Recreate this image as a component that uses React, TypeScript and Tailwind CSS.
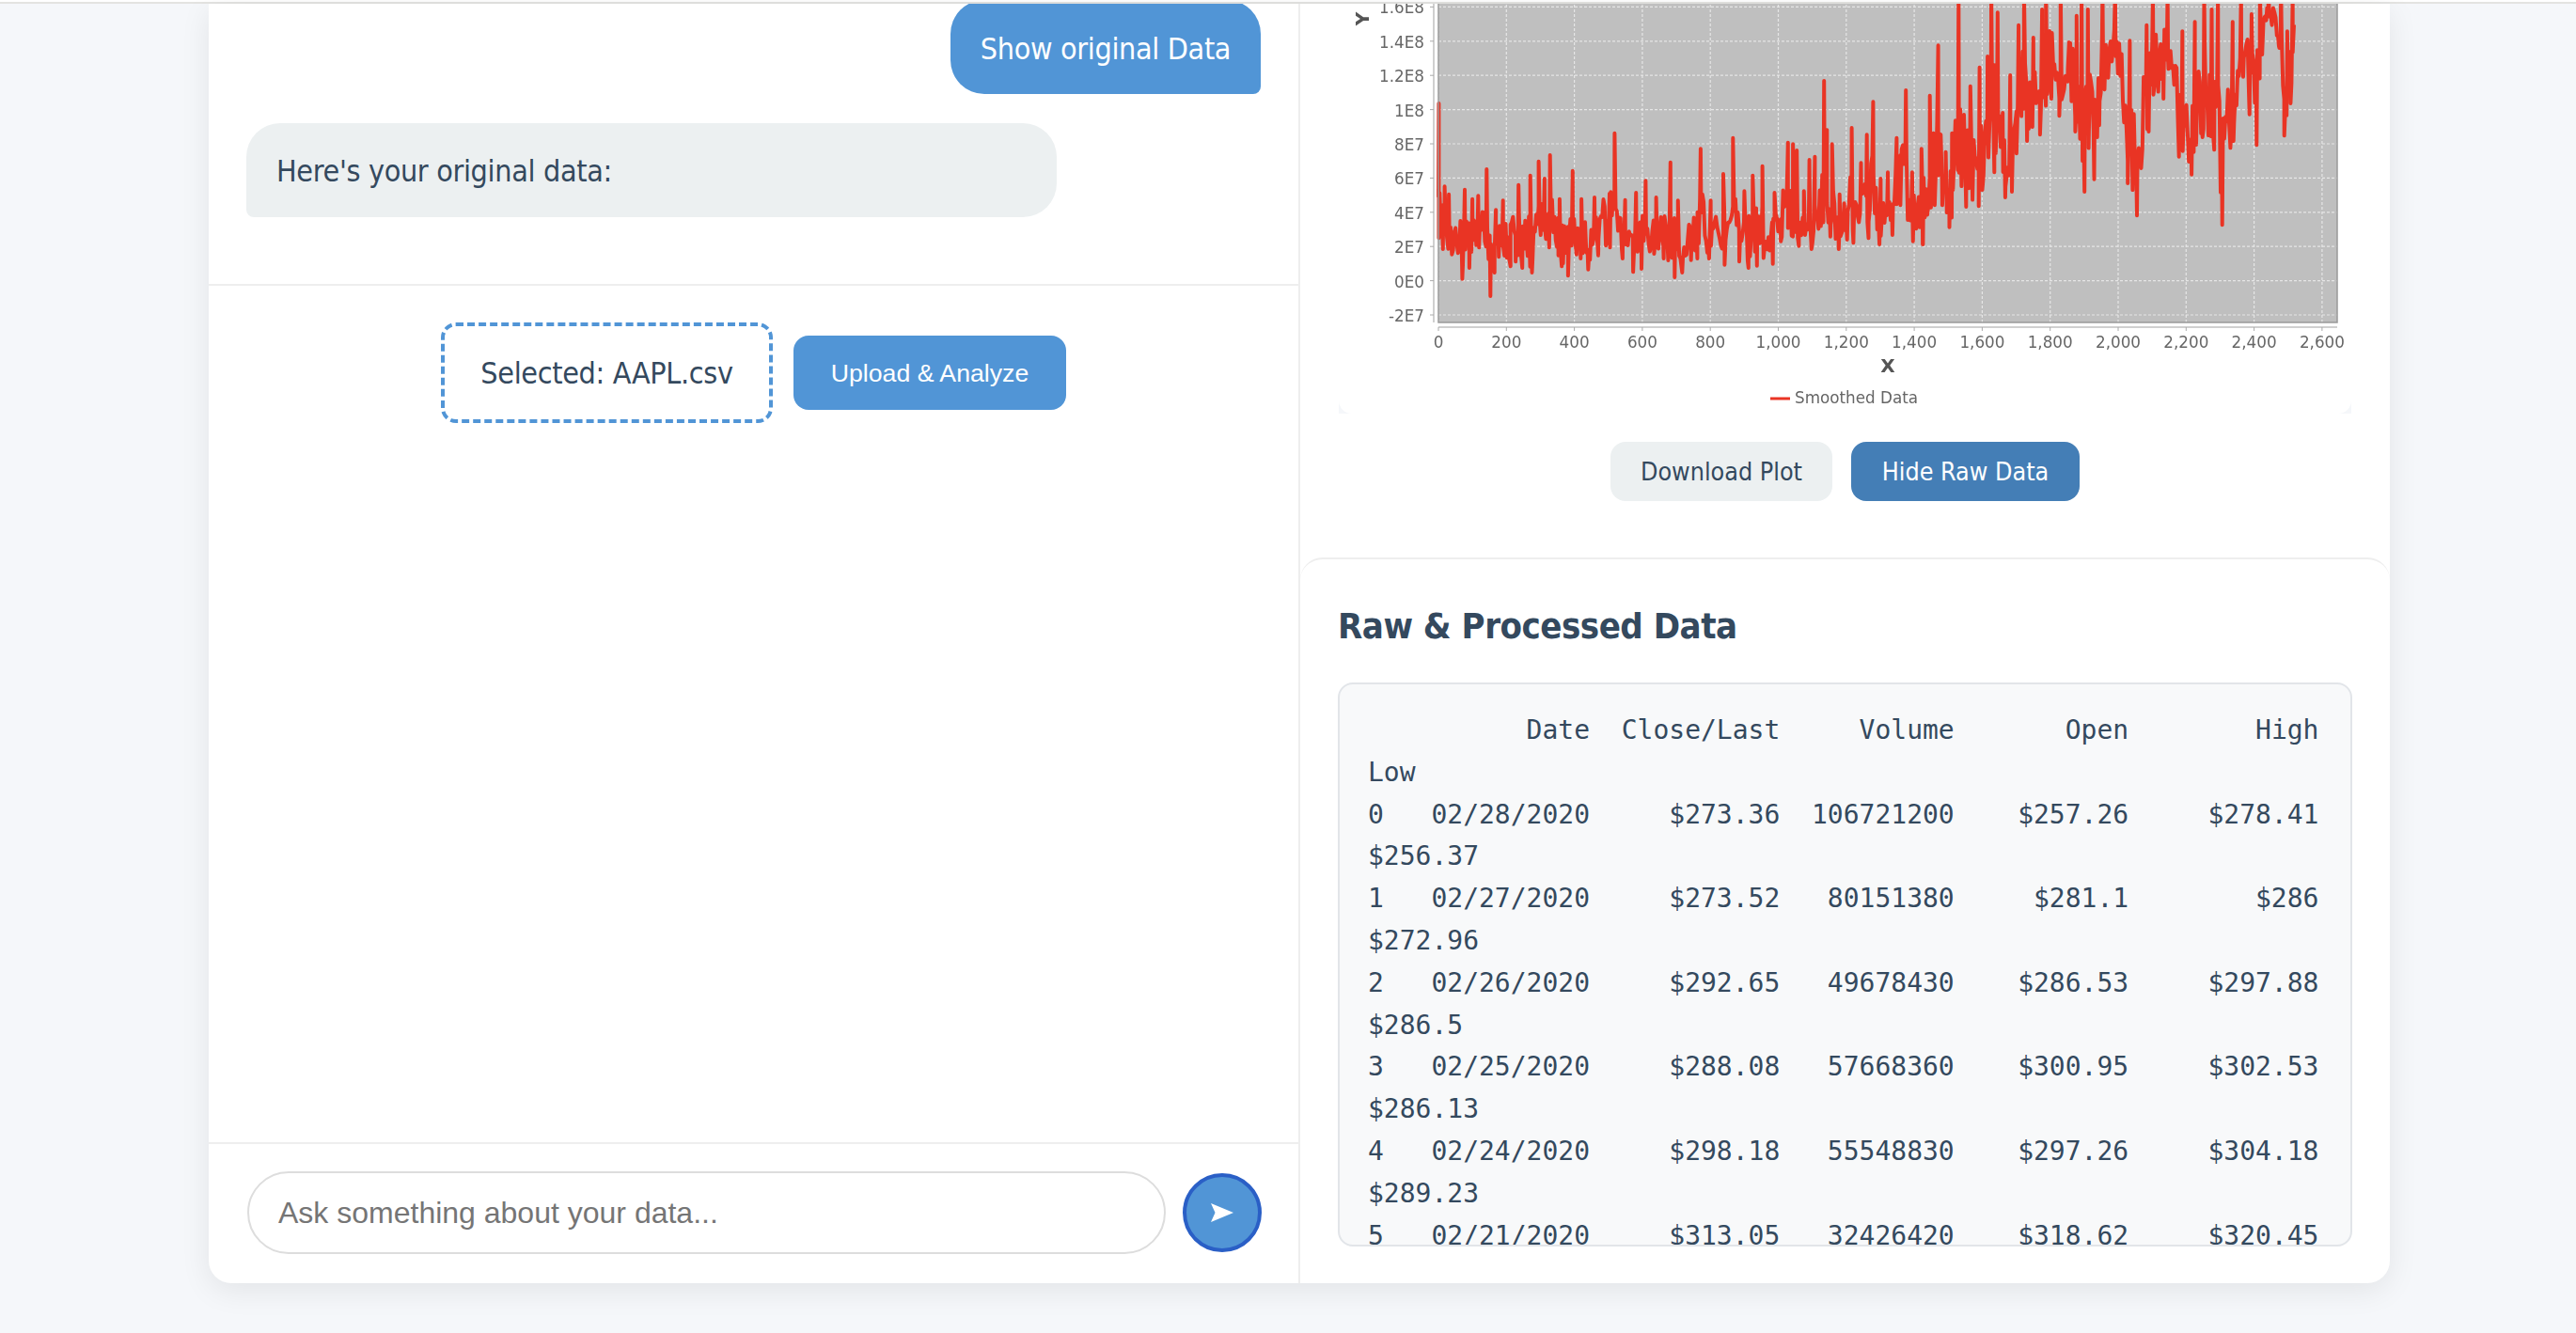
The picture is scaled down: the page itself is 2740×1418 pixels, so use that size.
import React from 'react';

const UI_FONT = "font-['DejaVu_Sans_Condensed','DejaVu_Sans',sans-serif]";

const RAW_DATA = [
  '          Date  Close/Last     Volume       Open        High      Low',
  '0   02/28/2020     $273.36  106721200    $257.26     $278.41     $256.37',
  '1   02/27/2020     $273.52   80151380     $281.1        $286     $272.96',
  '2   02/26/2020     $292.65   49678430    $286.53     $297.88      $286.5',
  '3   02/25/2020     $288.08   57668360    $300.95     $302.53     $286.13',
  '4   02/24/2020     $298.18   55548830    $297.26     $304.18     $289.23',
  '5   02/21/2020     $313.05   32426420    $318.62     $320.45',
].join('\n');

type Pt = [number, number];

// traced from the plot, in page pixels
const z2 = (p: Pt): Pt => [1400 + p[0] / 2.24, p[1] / 3];
const z3 = (p: Pt): Pt => [2040 + p[0] / 2.24, p[1] / 3];

const PEAKS: Pt[] = [
  ...([[292,330],[306,595],[316,620],[354,605],[372,635],[386,625],[406,540],[428,670],[445,640],[482,590],[510,560],[530,515],[544,570],[557,495],[580,635],[611,545],[632,635],[663,630],[711,425],[736,638],[762,615],[785,577],[810,630],[844,518],[862,640],[916,475],[940,640],[970,555],[993,440],[1020,610],[1040,560],[1063,530],[1092,615],[1124,455],[1136,460],[1145,480],[1162,610],[1175,510],[1188,500],[1210,258],[1217,415],[1229,460],[1247,620],[1276,408],[1298,520],[1312,430],[1327,325],[1345,570],[1362,550],[1383,440],[1405,288],[1420,550],[1442,475],[1462,305],[1482,145],[1500,485],[1515,425]] as Pt[]).map(z2),
  ...([[97,-30],[125,275],[147,215],[166,180],[175,-30],[190,40],[202,360],[220,240],[240,80],[253,-30],[275,120],[296,30],[305,-30],[340,-30],[378,50],[390,-30],[405,30],[440,-30],[470,-30],[505,130],[545,80],[560,-30],[595,-30],[630,100],[660,70],[682,-30],[700,30],[715,-30],[750,70],[770,-30],[795,45],[815,-30],[835,-30],[865,-30],[880,100],[893,-30]] as Pt[]).map(z3),
];

const TROUGHS: Pt[] = [
  ...([[292,760],[302,795],[348,890],[365,855],[388,790],[415,945],[425,870],[435,820],[463,850],[475,835],[491,855],[514,870],[535,750],[555,790],[577,815],[585,850],[600,880],[630,825],[648,860],[672,815],[700,790],[730,825],[755,868],[775,858],[805,810],[828,825],[854,885],[872,870],[893,830],[908,825],[936,825],[973,845],[1008,835],[1030,855],[1050,848],[1088,842],[1107,770],[1150,785],[1180,795],[1225,755],[1245,795],[1265,765],[1280,775],[1316,760],[1342,780],[1373,750],[1392,655],[1422,770],[1445,780]] as Pt[]).map(z2),
  ...([[12,780],[40,655],[58,655],[75,725],[115,660],[145,658],[182,550],[208,630],[224,612],[235,490],[260,450],[291,430],[318,315],[337,370],[357,260],[375,420],[397,612],[420,572],[432,400],[472,180],[500,585],[522,688],[550,420],[585,315],[597,220],[622,500],[652,557],[678,438],[706,478],[725,718],[752,450],[775,245],[790,365],[807,463],[830,65],[860,145],[873,433],[888,330],[897,195]] as Pt[]).map(z3),
];

const interp = (pts: Pt[], x: number) => {
  for (let i = 1; i < pts.length; i++) {
    if (x <= pts[i][0]) {
      const [x0, y0] = pts[i - 1];
      const [x1, y1] = pts[i];
      return y0 + ((y1 - y0) * (x - x0)) / (x1 - x0 || 1);
    }
  }
  return pts[pts.length - 1][1];
};

const buildSeries = () => {
  let seed = 42;
  const rand = () => {
    seed = (seed + 0x6d2b79f5) | 0;
    let t = Math.imul(seed ^ (seed >>> 15), 1 | seed);
    t = (t + Math.imul(t ^ (t >>> 7), 61 | t)) ^ t;
    return ((t ^ (t >>> 14)) >>> 0) / 4294967296;
  };
  const keys = [...PEAKS, ...TROUGHS].sort((a, b) => a[0] - b[0]);
  const out: Pt[] = [];
  let k = 0;
  for (let x = 1530; x < 2441; x += 1.3) {
    while (k < keys.length && keys[k][0] <= x) {
      out.push(keys[k]);
      k++;
    }
    const up = interp(PEAKS, x);
    const lo = interp(TROUGHS, x);
    out.push([x, up + (lo - up) * (0.35 + 0.6 * rand())]);
  }
  return out.map(([x, y]) => `${x.toFixed(1)},${y.toFixed(1)}`).join(' ');
};

const SERIES = buildSeries();

const X_TICKS = ['0', '200', '400', '600', '800', '1,000', '1,200', '1,400', '1,600', '1,800', '2,000', '2,200', '2,400', '2,600'];
const Y_TICKS = ['-2E7', '0E0', '2E7', '4E7', '6E7', '8E7', '1E8', '1.2E8', '1.4E8', '1.6E8'];

const xPos = (i: number) => 1530 + i * 72.3;
const yPos = (i: number) => 335 - i * 36.4;

const Plot: React.FC = () => (
  <div className="h-[436px] bg-[#f5f7fa]">
    <svg viewBox="1424 4 1077 436" width="1077" height="436" className="block bg-white rounded-b-[14px] blur-[0.5px]" fontFamily="'DejaVu Sans', sans-serif">
      <rect x="1530" y="0" width="956" height="343" fill="#bfbfbf" />
      {X_TICKS.map((_, i) => (
        <line key={i} x1={xPos(i)} x2={xPos(i)} y1="0" y2="343" stroke="#e6e6e6" strokeWidth="1.2" strokeDasharray="3 2" />
      ))}
      {Y_TICKS.map((_, i) => (
        <line key={i} x1="1530" x2="2486" y1={yPos(i)} y2={yPos(i)} stroke="#e6e6e6" strokeWidth="1.2" strokeDasharray="3 2" />
      ))}
      <polyline points={SERIES} fill="none" stroke="#e93424" strokeWidth="4" strokeLinejoin="round" />
      <path d="M1530 0V343H2486V0" fill="none" stroke="#9a9a9a" strokeWidth="1.5" />
      <path d="M1525 0V343M1530 348H2486" fill="none" stroke="#d0d0d0" strokeWidth="2" />
      {Y_TICKS.map((t, i) => (
        <g key={t}>
          <line x1="1521" x2="1525" y1={yPos(i)} y2={yPos(i)} stroke="#aaa" />
          <text x="1515" y={yPos(i) + 7} textAnchor="end" fontSize="16.8" fill="#666">{t}</text>
        </g>
      ))}
      {X_TICKS.map((t, i) => (
        <g key={t}>
          <line x1={xPos(i)} x2={xPos(i)} y1="348" y2="352" stroke="#aaa" />
          <text x={xPos(i)} y="370" textAnchor="middle" fontSize="16.8" fill="#666">{t}</text>
        </g>
      ))}
      <text x="2008" y="396" textAnchor="middle" fontSize="20" fontWeight="bold" fill="#555">X</text>
      <text transform="translate(1456 20) rotate(-90)" textAnchor="middle" fontSize="20" fontWeight="bold" fill="#555">Y</text>
      <line x1="1883" x2="1904" y1="424" y2="424" stroke="#e93424" strokeWidth="3" />
      <text x="1909" y="429" fontSize="16.8" fill="#666">Smoothed Data</text>
    </svg>
  </div>
);

const App: React.FC = () => {
  return (
    <div className={`h-[1418px] overflow-hidden bg-[#f5f7fa] text-[#34495e] ${UI_FONT}`}>
      <div className="h-[4px] bg-white border-b-2 border-[#e3e3e1]" />
      <div className="ml-[222px] w-[2320px] h-[1361px] flex bg-white rounded-b-[24px] shadow-[0_8px_32px_rgba(0,0,0,0.08)]">
        {/* chat column */}
        <div className="w-[1161px] flex flex-col border-r-2 border-[#eeeeee]">
          <div className="h-[298px] overflow-hidden px-[40px] flex flex-col gap-[31px]">
            <div className="-mt-[4px] self-end w-[330px] h-[100px] flex items-center justify-center pt-[3px] bg-[#5195d6] text-white text-[32px] tracking-[-0.33px] rounded-[36px] rounded-br-[8px]">
              Show original Data
            </div>
            <div className="w-[862px] h-[100px] flex items-center pt-[2px] px-[32px] bg-[#ecf0f1] text-[32px] tracking-[-0.33px] rounded-[36px] rounded-bl-[8px]">
              Here's your original data:
            </div>
          </div>
          <div className="flex-1 border-t-2 border-[#eeeeee] pt-[39px] flex justify-center items-start gap-[22px]">
            <div className="w-[353px] h-[107px] flex items-center justify-center border-4 border-dashed border-[#5195d6] rounded-[16px] text-[32px] tracking-[-0.33px]">
              Selected: AAPL.csv
            </div>
            <button className="mt-[14px] w-[290px] h-[79px] bg-[#5195d6] text-white rounded-[16px] text-[26.67px] font-['Liberation_Sans',sans-serif]">
              Upload &amp; Analyze
            </button>
          </div>
          <div className="h-[150px] border-t-2 border-[#eeeeee] pl-[41px] pr-[39px] pt-[29px] flex items-start gap-[18px]">
            <input
              placeholder="Ask something about your data..."
              className="flex-1 min-w-0 h-[88px] px-[31px] border-2 border-[#dddddd] rounded-full bg-white text-[32px] placeholder:text-[#757575] outline-none font-['Liberation_Sans',sans-serif]"
            />
            <button className="mt-[2px] w-[84px] h-[84px] flex items-center justify-center rounded-full bg-[#5195d6] border-4 border-[#2a5fc6]">
              <svg viewBox="0 0 26 22" width="26" height="22">
                <path d="M1 1 L25 11 L1 21 L5.5 11 Z" fill="white" />
              </svg>
            </button>
          </div>
        </div>

        {/* plot + data column */}
        <div className="flex-1 flex flex-col">
          <div className="px-[41px]">
            <Plot />
            <div className="mt-[30px] flex justify-center gap-[20px]">
              <button className="w-[236px] h-[63px] bg-[#ecf0f1] rounded-[16px] text-[26.67px]">Download Plot</button>
              <button className="w-[243px] h-[63px] bg-[#447eb6] text-white rounded-[16px] text-[26.67px]">Hide Raw Data</button>
            </div>
          </div>
          <div className="mt-[60px] flex-1 border-t-2 border-[#eeeeee] rounded-[24px] px-[40px] pt-[48px]">
            <h2 className="text-[38px] leading-[46px] font-bold tracking-[-0.5px]">Raw &amp; Processed Data</h2>
            <pre className="mt-[37px] h-[600px] overflow-hidden bg-[#f8f9fa] border-2 border-[#e2e5e9] rounded-[16px] px-[30px] pt-[27px] whitespace-pre-wrap text-[28px] leading-[44.8px] font-['DejaVu_Sans_Mono',monospace]">
              {RAW_DATA}
            </pre>
          </div>
        </div>
      </div>
    </div>
  );
};

export default App;
